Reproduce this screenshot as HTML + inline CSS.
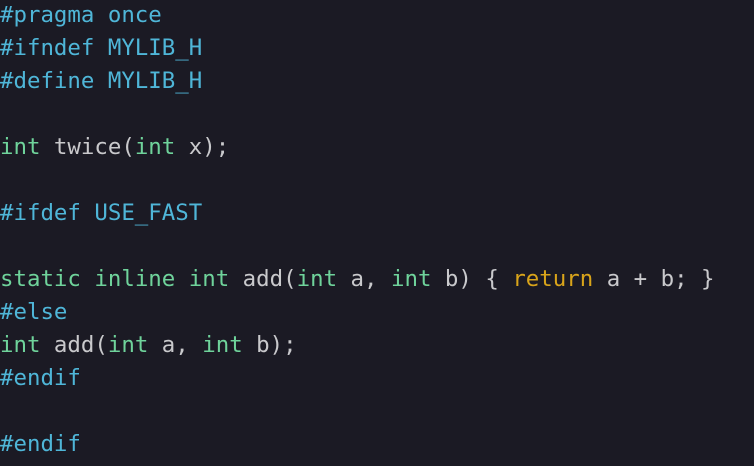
<!DOCTYPE html>
<html><head><style>
html,body{margin:0;padding:0;background:#1b1a24;width:754px;height:466px;overflow:hidden}
pre{margin:0;position:absolute;left:0;top:-1px;font-family:"DejaVu Sans Mono","Liberation Mono",monospace;font-size:22.4px;line-height:33px;color:#c9c9cc}
.p{color:#4fb6d8}.t{color:#6fd39b}.k{color:#d9a41a}
</style></head><body><pre><span class="p">#pragma once</span>
<span class="p">#ifndef MYLIB_H</span>
<span class="p">#define MYLIB_H</span>

<span class="t">int</span> twice(<span class="t">int</span> x);

<span class="p">#ifdef USE_FAST</span>

<span class="t">static</span> <span class="t">inline</span> <span class="t">int</span> add(<span class="t">int</span> a, <span class="t">int</span> b) { <span class="k">return</span> a + b; }
<span class="p">#else</span>
<span class="t">int</span> add(<span class="t">int</span> a, <span class="t">int</span> b);
<span class="p">#endif</span>

<span class="p">#endif</span></pre></body></html>
